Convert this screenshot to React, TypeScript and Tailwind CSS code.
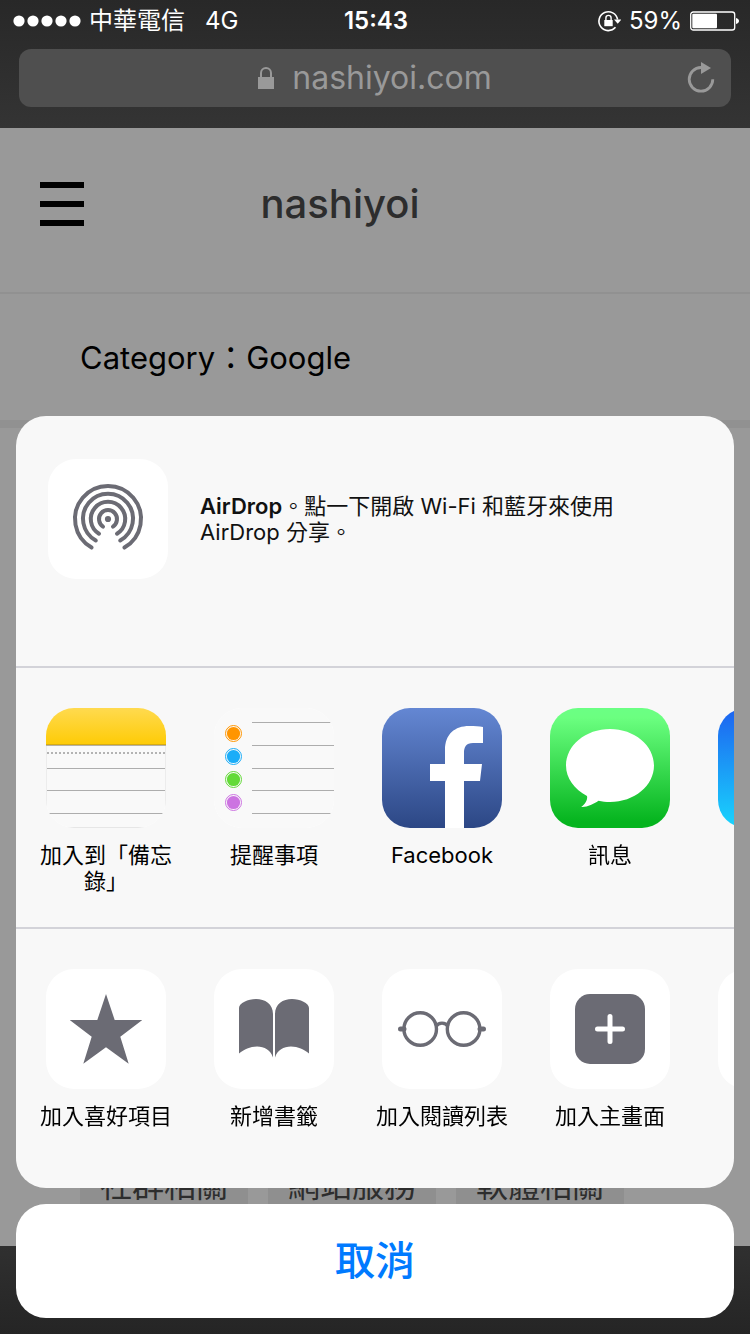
import type { ReactNode } from "react";

const tags = ["社群相關", "網站服務", "軟體相關"];

const reminderDots = [
  { y: 25, color: "#ff9500" },
  { y: 48, color: "#1badf8" },
  { y: 71, color: "#63da38" },
  { y: 94, color: "#cc73e1" },
];

function SignalDots() {
  return (
    <svg className="w-[68px] h-3" viewBox="0 0 68 12" fill="currentColor" aria-hidden="true">
      {[6, 20, 34, 48, 62].map((cx) => (
        <circle key={cx} cx={cx} cy="6" r="5.6" />
      ))}
    </svg>
  );
}

function RotationLock() {
  return (
    <svg className="w-6 h-6" viewBox="0 0 24 24" fill="none" aria-hidden="true">
      <path d="M20.6 10.500A9.400 9.400 0 1 0 18.500 18.300" stroke="currentColor" strokeWidth="1.600" />
      <path d="M17 10.500h7.400l-3.700 4.200z" fill="currentColor" />
      <rect x="7.300" y="11" width="8.400" height="6.200" fill="currentColor" />
      <path d="M8.900 11V9a2.600 2.600 0 0 1 5.200 0v2" stroke="currentColor" strokeWidth="1.400" />
    </svg>
  );
}

function Battery() {
  return (
    <svg className="w-[49px] h-5" viewBox="0 0 49 20" fill="none" aria-hidden="true">
      <rect x="0.700" y="1" width="44" height="18" rx="2.600" stroke="currentColor" strokeWidth="1.300" />
      <rect x="2.300" y="2.700" width="24.700" height="14.600" rx="1" fill="currentColor" />
      <path d="M46 7c2 .6 3 1.600 3 3s-1 2.500-3 3z" fill="currentColor" />
    </svg>
  );
}

function PadlockIcon() {
  return (
    <svg className="w-4 h-[22px]" viewBox="0 0 16 22" fill="none" aria-hidden="true">
      <rect y="10" width="16" height="12" fill="currentColor" />
      <path d="M3 11V6a5 5 0 0 1 10 0v5" stroke="currentColor" strokeWidth="2" />
    </svg>
  );
}

function ReloadIcon() {
  return (
    <svg className="w-7 h-8" viewBox="0 0 28 32" fill="none" aria-hidden="true">
      <path d="M14 5.500A11.800 11.800 0 1 0 25.800 17.300" stroke="currentColor" strokeWidth="2.800" />
      <path d="M14 0v12l10-6z" fill="currentColor" />
    </svg>
  );
}

function AirDropIcon() {
  return (
    <svg viewBox="0 0 120 120" fill="none" stroke="#6b6b74" strokeWidth="4" strokeLinecap="round" aria-hidden="true">
      <path d="M43.600 88.600A33 33 0 1 1 76.400 88.600" />
      <path d="M47.800 81.500A25 25 0 1 1 72.200 81.500" />
      <path d="M51 74.700A17.200 17.200 0 1 1 69 74.700" />
      <path d="M55 67.600A9 9 0 1 1 65 67.600" />
      <circle cx="60" cy="60" r="3.100" fill="#6b6b74" stroke="none" />
    </svg>
  );
}

function NotesIcon() {
  return (
    <svg viewBox="0 0 120 120" aria-hidden="true">
      <defs>
        <linearGradient id="notes" x1="0" y1="0" x2="0" y2="1">
          <stop offset="0" stopColor="#ffda4f" />
          <stop offset="1" stopColor="#fecb05" />
        </linearGradient>
      </defs>
      <rect width="120" height="120" fill="#f9f9f9" />
      <rect width="120" height="37" fill="url(#notes)" />
      <path d="M0 36.500h120" stroke="#d6ab12" />
      <path d="M0 37.500h120" stroke="#b5b1a6" />
      <path d="M1 45h118" stroke="#b3b3b3" strokeWidth="2" strokeDasharray="2 2" />
      <path d="M0 60.500h120M0 82.500h120M3 105.500h114" stroke="#adadad" />
      <path d="M22 119.500h76" stroke="#e6e6e6" />
      <path d="M.5 38v60M119.500 38v60" stroke="#ececec" />
    </svg>
  );
}

function RemindersIcon() {
  return (
    <svg viewBox="0 0 120 120" fill="none" aria-hidden="true">
      <rect width="120" height="120" fill="#f9f9f9" />
      <path d="M38 14.500h79M38 37.500h82M38 60.500h82M38 82.500h82M38 105.500h79" stroke="#adadad" />
      {reminderDots.map((dot) => (
        <g key={dot.y}>
          <circle cx="19.500" cy={dot.y + 0.5} r="6.600" fill={dot.color} />
          <circle cx="19.500" cy={dot.y + 0.5} r="8" stroke={dot.color} />
        </g>
      ))}
    </svg>
  );
}

function FacebookIcon() {
  return (
    <svg viewBox="0 0 120 120" aria-hidden="true">
      <defs>
        <linearGradient id="facebook" x1="0" y1="0" x2="0" y2="1">
          <stop offset="0" stopColor="#6487d3" />
          <stop offset="1" stopColor="#2c4785" />
        </linearGradient>
      </defs>
      <rect width="120" height="120" fill="url(#facebook)" />
      <path
        d="M63 120V73H48V56h15V42c0-16 10-24 24-24 6 0 10 .4 14 1v16H91c-7 0-9 4-9 10v11h18l-2 17H82v47z"
        fill="#fff"
      />
    </svg>
  );
}

function MessagesIcon() {
  return (
    <svg viewBox="0 0 120 120" aria-hidden="true">
      <defs>
        <linearGradient id="messages" x1="0" y1="0" x2="0" y2="1">
          <stop offset="0" stopColor="#6bff84" />
          <stop offset="0.080" stopColor="#6bff80" />
          <stop offset="0.950" stopColor="#05b41e" />
        </linearGradient>
      </defs>
      <rect width="120" height="120" fill="url(#messages)" />
      <path
        d="M60 21c24.300 0 44 16.300 44 36.500S84.300 94 60 94c-4 0-8-.4-11.500-1.200C43.500 96 37 99.500 31.200 99c3.600-2.600 6.800-7 5.800-11C24.500 81.500 16 70.300 16 57.500 16 37.300 35.700 21 60 21z"
        fill="#fff"
      />
    </svg>
  );
}

function MailIcon() {
  return (
    <svg viewBox="0 0 120 120" aria-hidden="true">
      <defs>
        <linearGradient id="mail" x1="0" y1="0" x2="0" y2="1">
          <stop offset="0" stopColor="#1d62f0" />
          <stop offset="1" stopColor="#19d5fd" />
        </linearGradient>
      </defs>
      <rect width="120" height="120" fill="url(#mail)" />
    </svg>
  );
}

function StarIcon() {
  return (
    <svg viewBox="0 0 120 120" fill="#6b6b74" aria-hidden="true">
      <path d="M60 25l8.700 26h27.600L74.300 67.700l8.400 27L60 78.300 37.300 94.700l8.400-27L23.700 51h27.600z" />
    </svg>
  );
}

function BookIcon() {
  return (
    <svg viewBox="0 0 120 120" fill="#6b6b74" aria-hidden="true">
      <path d="M25 39C25 34 34 30 42 30c9 0 17 5 17 15v43.500C56.500 81 50.500 77.500 43 77.500c-7 0-13 3-18 7z" />
      <path d="M95 39C95 34 86 30 78 30c-9 0-17 5-17 15v43.500C63.500 81 69.500 77.500 77 77.500c7 0 13 3 18 7z" />
    </svg>
  );
}

function GlassesIcon() {
  return (
    <svg viewBox="0 0 120 120" fill="none" stroke="#6b6b74" strokeWidth="3.400" aria-hidden="true">
      <circle cx="38.200" cy="60" r="16.300" />
      <circle cx="81.600" cy="60" r="16.300" />
      <path d="M54 57.500c2.500-4.500 9.500-4.500 12 0" />
      <path d="M18.500 60H22M98 60h3.500" strokeWidth="5" strokeLinecap="round" />
    </svg>
  );
}

function HomeScreenIcon() {
  return (
    <svg viewBox="0 0 120 120" fill="none" aria-hidden="true">
      <rect x="25" y="25" width="70" height="70" rx="15" fill="#6b6b74" />
      <path d="M60 47.500v25M47.500 60h25" stroke="#fff" strokeWidth="5" strokeLinecap="round" />
    </svg>
  );
}

const apps = [
  { label: "加入到「備忘錄」", icon: <NotesIcon /> },
  { label: "提醒事項", icon: <RemindersIcon /> },
  { label: "Facebook", icon: <FacebookIcon /> },
  { label: "訊息", icon: <MessagesIcon /> },
  { label: "", icon: <MailIcon /> },
];

const actions = [
  { label: "加入喜好項目", icon: <StarIcon /> },
  { label: "新增書籤", icon: <BookIcon /> },
  { label: "加入閱讀列表", icon: <GlassesIcon /> },
  { label: "加入主畫面", icon: <HomeScreenIcon /> },
  { label: "", icon: null },
];

function Tile({ children }: { children: ReactNode }) {
  return (
    <span className="block size-[120px] shrink-0 overflow-hidden rounded-[28px] bg-white">
      {children}
    </span>
  );
}

function ShareRow({ items }: { items: { label: string; icon: ReactNode }[] }) {
  return (
    <ul className="flex gap-6 overflow-hidden border-t-2 border-[#d3d3d9] pl-[18px] pt-10 h-[261px]">
      {items.map((item, i) => (
        <li key={i} className="w-36 shrink-0">
          <button type="button" className="flex w-full flex-col items-center gap-[14px]">
            <Tile>{item.icon}</Tile>
            <span className="text-[22px] leading-[26px] text-black">{item.label}</span>
          </button>
        </li>
      ))}
    </ul>
  );
}

export default function App() {
  return (
    <div
      lang="zh-Hant"
      className="flex min-h-screen flex-col bg-[#999999] font-['Inter','Noto_Sans_CJK_TC',sans-serif]"
    >
      {/* Browser chrome */}
      <header className="bg-linear-to-b from-[#282828] to-[#343434] pb-[21px]">
        <div className="grid h-[42px] grid-cols-[1fr_auto_1fr] items-center pl-[13px] pr-[11px] text-[24px] leading-10 text-white">
          <div className="flex items-center gap-2">
            <SignalDots />
            <span>中華電信</span>
            <span className="pl-3">4G</span>
          </div>
          <span className="font-semibold">15:43</span>
          <div className="flex items-center justify-end">
            <RotationLock />
            <span className="px-2">59%</span>
            <Battery />
          </div>
        </div>
        <div className="mx-[19px] mt-[7px] grid h-[58px] grid-cols-[1fr_auto_1fr] items-center rounded-xl bg-[#4f4f4f] text-[#999999]">
          <span />
          <div className="flex items-center gap-[18px]">
            <PadlockIcon />
            <span className="text-[32px] leading-10">nashiyoi.com</span>
          </div>
          <button type="button" aria-label="Reload" className="mr-4 justify-self-end">
            <ReloadIcon />
          </button>
        </div>
      </header>

      {/* Page behind the sheet */}
      <div className="flex h-[166px] items-center border-b-2 border-[#919191] pb-3 pl-10">
        <button type="button" aria-label="Menu" className="flex w-11 flex-col gap-[13px]">
          <span className="h-[6px] bg-black" />
          <span className="h-[6px] bg-black" />
          <span className="h-[6px] bg-black" />
        </button>
        <h1 className="flex-1 pr-[154px] text-center text-[40px] leading-[48px] font-medium text-[#2d2d2d]">
          nashiyoi
        </h1>
      </div>
      <h2 className="border-b-8 border-[#919191] px-20 pt-10 pb-[38px] text-[31px] leading-[48px] text-black">
        Category：Google
      </h2>
      <main className="flex flex-1 items-end gap-5 px-20 pb-7">
        {tags.map((tag) => (
          <a
            key={tag}
            href="#"
            className="bg-[#8f8f8f] px-5 text-[32px] leading-[64px] text-[#2d2d2d]"
          >
            {tag}
          </a>
        ))}
      </main>
      <footer className="h-[88px] bg-linear-to-b from-[#303030] to-[#252525]" />

      {/* Share sheet */}
      <div role="dialog" aria-label="Share" className="fixed inset-x-0 bottom-0 flex flex-col gap-4 p-4">
        <div className="overflow-hidden rounded-[30px] bg-[#f8f8f8]">
          <div className="flex items-center gap-8 pt-[43px] pr-8 pb-[87px] pl-8">
            <Tile>
              <AirDropIcon />
            </Tile>
            <p className="max-w-[440px] text-[22px] leading-[26px] text-[#111111]">
              <b className="font-semibold">AirDrop</b>。點一下開啟 Wi-Fi 和藍牙來使用 AirDrop 分享。
            </p>
          </div>
          <ShareRow items={apps} />
          <ShareRow items={actions} />
        </div>
        <button
          type="button"
          className="h-[114px] rounded-[30px] bg-white text-[40px] font-medium text-[#007aff]"
        >
          取消
        </button>
      </div>
    </div>
  );
}
